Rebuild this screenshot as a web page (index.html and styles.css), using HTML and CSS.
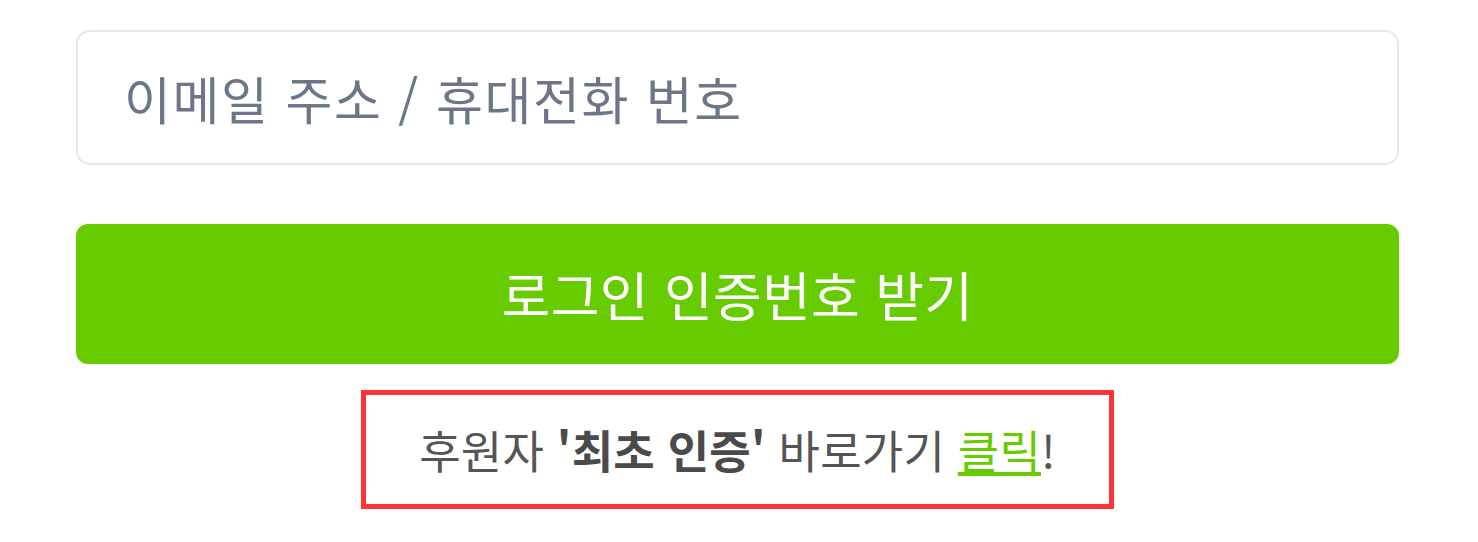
FILE: index.html
```html
<!DOCTYPE html>
<html lang="ko">
<head>
<meta charset="utf-8">
<link rel="stylesheet" href="styles.css">
</head>
<body>
<div class="login">
  <div class="field">
    <input class="field-input" type="text" placeholder="이메일 주소 / 휴대전화 번호">
  </div>
  <button class="submit" type="button">로그인 인증번호 받기</button>
  <div class="notice">
    <p class="notice-box">후원자 <strong>'최초 인증'</strong> 바로가기 <a class="notice-link" href="#">클릭</a>!</p>
  </div>
</div>
</body>
</html>
```
FILE: styles.css
```css
html, body {
  margin: 0;
  padding: 0;
  background: #ffffff;
}
body {
  font-family: "Noto Sans CJK KR", "Noto Sans", sans-serif;
}
.login {
  padding: 30px 79px 0 76px;
  display: flex;
  flex-direction: column;
}
.field {
  display: flex;
}
.field-input {
  box-sizing: border-box;
  width: 100%;
  height: 135px;
  border: 2px solid #e8e8e8;
  border-radius: 14px;
  padding: 0 46px;
  font-family: "Noto Sans CJK KR", sans-serif;
  font-size: 51px;
  letter-spacing: 1.6px;
  color: #333;
  outline: none;
  background: #fff;
}
.field-input::placeholder {
  color: #6b7789;
}
.submit {
  margin-top: 59px;
  height: 140px;
  border: none;
  border-radius: 12px;
  background: #66cc00;
  color: #ffffff;
  font-family: "Noto Sans CJK KR", sans-serif;
  font-size: 53px;
  letter-spacing: 0.3px;
  padding: 0;
}
.notice {
  display: flex;
  justify-content: center;
  margin-top: 26px;
}
.notice-box {
  margin: 0;
  box-sizing: border-box;
  width: 753px;
  height: 119px;
  border: 5px solid #ff3333;
  display: flex;
  align-items: center;
  justify-content: center;
  font-size: 45px;
  letter-spacing: 0.2px;
  color: #555555;
  white-space: pre;
}
.notice-box strong {
  font-weight: 700;
  color: #4a4a4a;
}
.notice-link {
  color: #66cc00;
  text-decoration: underline;
}
```
